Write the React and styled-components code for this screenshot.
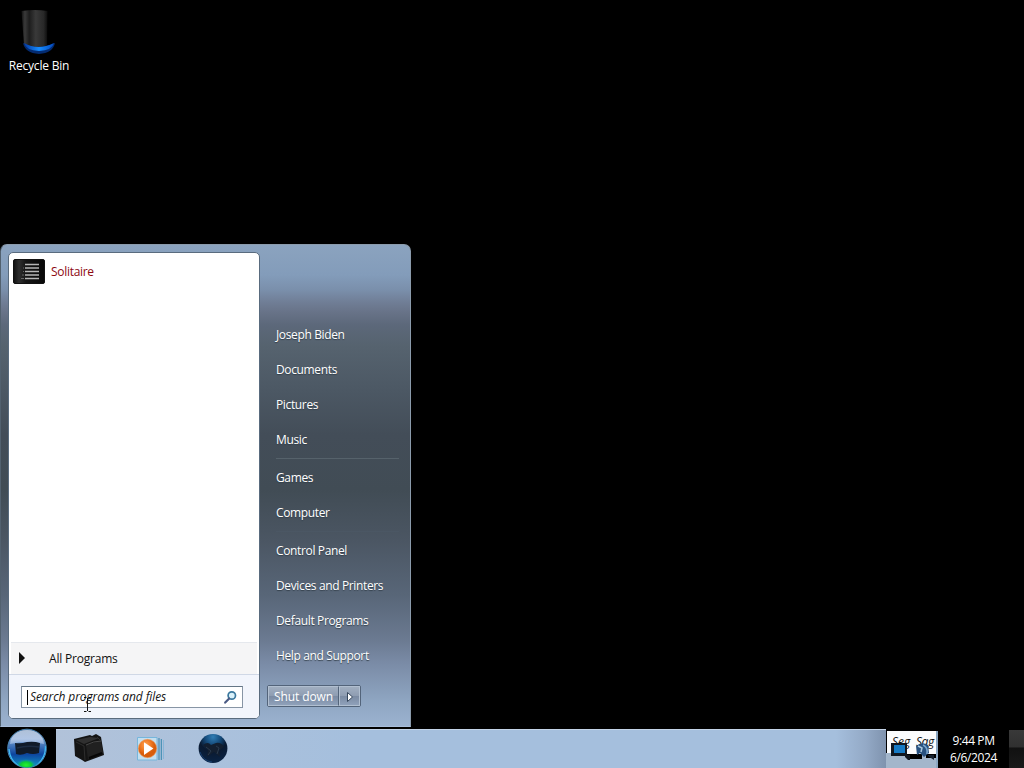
import React, { useState } from 'react';
import styled, { createGlobalStyle } from 'styled-components';

const places = [
  { name: 'Joseph Biden' },
  { name: 'Documents' },
  { name: 'Pictures' },
  { name: 'Music', line: true },
  { name: 'Games' },
  { name: 'Computer', line: true, faint: true },
  { name: 'Control Panel' },
  { name: 'Devices and Printers' },
  { name: 'Default Programs' },
  { name: 'Help and Support' },
];

export default function App() {
  const [search, setSearch] = useState('');

  return (
    <Screen>
      <GlobalStyle />
      <Desktop>
        <DesktopItem>
          <BinIcon />
          <span>Recycle Bin</span>
        </DesktopItem>

        <StartMenu>
          <Programs>
            <ProgramList>
              <Program>
                <SolitaireIcon />
                <span>Solitaire</span>
              </Program>
            </ProgramList>
            <AllPrograms>
              <Triangle $color="#111" />
              <span>All Programs</span>
            </AllPrograms>
            <SearchArea>
              <SearchBox>
                <Caret />
                <input
                  placeholder="Search programs and files"
                  value={search}
                  onChange={({ target }) => setSearch(target.value)}
                />
                <SearchIcon />
              </SearchBox>
            </SearchArea>
          </Programs>

          <Places>
            {places.map((place) => (
              <React.Fragment key={place.name}>
                <Place>{place.name}</Place>
                {place.line && <Line $faint={place.faint} />}
              </React.Fragment>
            ))}
            <Power>
              <button>Shut down</button>
              <button aria-label="More"><PowerArrow /></button>
            </Power>
          </Places>
        </StartMenu>
        <TextCursor />
      </Desktop>

      <Taskbar>
        <StartButton><Orb /></StartButton>
        <TaskButtons>
          <LibraryIcon />
          <PlayerIcon />
          <GlobeIcon />
        </TaskButtons>
        <Tray><TrayIcons /></Tray>
        <Clock>
          <span>9:44 PM</span>
          <span>6/6/2024</span>
        </Clock>
        <ShowDesktop />
      </Taskbar>
    </Screen>
  );
}

/* icons */

const BinIcon = () => (
  <svg width="48" height="48" viewBox="0 0 48 48">
    <defs>
      <linearGradient id="bin">
        <stop offset="0" stopColor="#111" />
        <stop offset=".13" stopColor="#3a3a3a" />
        <stop offset=".3" stopColor="#1d1d1d" />
        <stop offset=".55" stopColor="#393939" />
        <stop offset=".85" stopColor="#282828" />
        <stop offset="1" stopColor="#0c0c0c" />
      </linearGradient>
      <linearGradient id="binGlow">
        <stop offset="0" stopColor="#0437a0" />
        <stop offset=".5" stopColor="#168cff" />
        <stop offset="1" stopColor="#0448bb" />
      </linearGradient>
    </defs>
    <path d="M6.5 2 Q20 0 32.5 2 L32 37 Q20 41 9 36Z" fill="url(#bin)" />
    <path d="M8 34 Q22 42 40 34 Q38 44 24 45 Q10 44 8 34Z" fill="#042b70" />
    <path d="M9 34 Q23 42 39 34 Q37 41.5 24 42 Q11 41.5 9 34Z" fill="url(#binGlow)" />
  </svg>
);

const SolitaireIcon = () => (
  <svg width="32" height="26" viewBox="0 0 32 26">
    <defs>
      <linearGradient id="sol">
        <stop offset="0" stopColor="#101010" />
        <stop offset=".18" stopColor="#2e2e2e" />
        <stop offset=".4" stopColor="#151515" />
        <stop offset="1" stopColor="#080808" />
      </linearGradient>
    </defs>
    <rect x=".5" y=".5" width="31" height="24" rx="1.5" fill="url(#sol)" stroke="#111" />
    <path d="M12 5.5h14M12 9h14M12 12.5h14M12 16h14M12 19.5h14" stroke="#b5b5b5" strokeWidth="1.4" />
    <path d="M10 9h1M10 12.5h1M9 16h2M8 19.5h3" stroke="#666" />
  </svg>
);

const SearchIcon = () => (
  <svg width="15" height="15" viewBox="0 0 15 15">
    <circle cx="8.8" cy="5.5" r="3.7" fill="#d9f1fa" stroke="#3b789e" strokeWidth="1.7" />
    <path d="M6.2 8.5 L2.2 12.6" stroke="#4b5b85" strokeWidth="2.2" strokeLinecap="round" />
  </svg>
);

const PowerArrow = () => (
  <svg width="8" height="12" viewBox="0 0 8 12">
    <path d="M1.5 1.5 L6.5 6 L1.5 10.5Z" fill="#fff" stroke="#35465b" strokeWidth="1" />
  </svg>
);

const Orb = () => (
  <svg width="42" height="40" viewBox="0 0 42 40">
    <defs>
      <linearGradient id="orb" x2="0" y2="1">
        <stop offset="0" stopColor="#56749b" />
        <stop offset=".25" stopColor="#8fa9cf" />
        <stop offset=".4" stopColor="#4a7bbd" />
        <stop offset=".65" stopColor="#0d459f" />
        <stop offset="1" stopColor="#129bc8" />
      </linearGradient>
      <radialGradient id="orbGreen">
        <stop offset="0" stopColor="#25f52c" />
        <stop offset=".55" stopColor="#0bc83b" />
        <stop offset="1" stopColor="#0697b8" stopOpacity="0" />
      </radialGradient>
      <linearGradient id="orbShine" x2="0" y2="1">
        <stop offset="0" stopColor="#e9f2ff" stopOpacity=".6" />
        <stop offset="1" stopColor="#b9cff0" stopOpacity=".55" />
      </linearGradient>
      <clipPath id="orbClip"><circle cx="20" cy="20.5" r="19" /></clipPath>
    </defs>
    <circle cx="20" cy="20.5" r="19.3" fill="url(#orb)" stroke="#4b86b4" strokeWidth="1" />
    <g clipPath="url(#orbClip)">
      <ellipse cx="19" cy="37" rx="10" ry="6" fill="url(#orbGreen)" />
      <path d="M3 16 Q5 2 20 2 Q35 2 37 16 Q20 12 3 16Z" fill="url(#orbShine)" />
      <path d="M8 15 Q14 16 20 14 Q27 13 33 15 L32 25 Q26 27 20 25 Q14 28 9 26Z" fill="#101a29" />
      <path d="M10 20 Q20 17 32 19" stroke="#1c2b42" strokeWidth="1.5" fill="none" />
      <path d="M2 21 Q3 33 12 38M38.5 18 Q39 30 29 38" stroke="#42bcf4" strokeWidth="1.4" fill="none" />
    </g>
  </svg>
);

const LibraryIcon = () => (
  <svg width="32" height="32" viewBox="0 0 32 32">
    <path d="M1 6 L17 2 L19 3 L23 1 L28 4 L31 22 L12 29 L9 27 L2 23Z" fill="#141414" />
    <path d="M3 7 L17 4 L26 5 L11 11Z" fill="#303030" />
    <path d="M13 12 L28 8 L30 20 L15 26Z" fill="#202020" />
    <path d="M13 12 Q21 8 28 8" stroke="#4d4d4d" strokeWidth=".9" fill="none" />
    <path d="M3 9 L11 13 L12 27M24 4 L27 7" stroke="#343434" strokeWidth=".8" fill="none" />
    <path d="M16 25 L29 20" stroke="#060606" strokeWidth="2" />
  </svg>
);

const PlayerIcon = () => (
  <svg width="28" height="26" viewBox="0 0 28 26">
    <defs>
      <radialGradient id="play" cx=".4" cy=".3">
        <stop offset="0" stopColor="#ffa254" />
        <stop offset=".6" stopColor="#ee7923" />
        <stop offset="1" stopColor="#d85d0b" />
      </radialGradient>
    </defs>
    <path d="M.5 1.5 H20 V24 H.5Z" fill="#c4dfef" stroke="#76b6dc" />
    <path d="M22 2V24M24.3 3V24" stroke="#3587ad" strokeWidth="1" />
    <path d="M26.5 4V23" stroke="#7fb2d5" strokeWidth=".8" />
    <circle cx="10.5" cy="12.5" r="9.2" fill="url(#play)" stroke="#e99b60" strokeWidth=".6" />
    <path d="M7 6.2 L16.4 12.5 L7 19Z" fill="#fff" />
  </svg>
);

const GlobeIcon = () => (
  <svg width="30" height="32" viewBox="0 0 30 32">
    <defs>
      <radialGradient id="globe" cx=".5" cy=".1" r=".9">
        <stop offset="0" stopColor="#317eb5" />
        <stop offset=".3" stopColor="#154b7b" />
        <stop offset=".55" stopColor="#0a1a31" />
        <stop offset="1" stopColor="#0a2344" />
      </radialGradient>
    </defs>
    <circle cx="15" cy="15.5" r="14.4" fill="url(#globe)" />
    <path d="M5 12 Q10 8 13 12 L18 10 Q23 9 26 14 L21 18 L22 24 L16 19 L9 24 L10 17Z" fill="#131f30" />
    <path d="M8 14 L13 18 L10 22M18 13 L21 15 L19 21" stroke="#2a3a4d" strokeWidth="1" fill="none" />
    <path d="M2 19 Q5 28 14 29" stroke="#173f70" fill="none" />
  </svg>
);

const TrayIcons = () => (
  <svg width="52" height="37" viewBox="0 0 52 37">
    <rect x="1" width="49" height="23" fill="#fbfcfd" />
    <path d="M0 22h20v3h4v3h12v-4h4v3h10v10H0Z" fill="#a3b6cb" />
    <path d="M50 0h2v37h-2Z" fill="#8ba7c2" />
    <g fontFamily="Open Sans, sans-serif" fontSize="12" fontStyle="italic" fill="#111">
      <text x="6" y="15" textLength="18">Seg</text>
      <text x="30" y="15" textLength="18">Sag</text>
    </g>
    <rect x="5" y="12" width="16" height="13" fill="#101720" />
    <rect x="8" y="14" width="11" height="8" fill="#167ac4" />
    <path d="M19 24h5v5h-2l-3-3Z" fill="#101720" />
    <path d="M30 15 Q36 10 42 14 L43 22 L38 26 L34 22 L31 24Z" fill="#28517f" />
    <path d="M32 15 L36 17 L35 21" stroke="#a9c8de" strokeWidth="1.5" fill="none" />
    <path d="M37 14 Q42 16 41 23" stroke="#7aa6ce" strokeWidth="1.6" fill="none" />
    <path d="M42 24h6v5l-6-4Z" fill="#15202e" />
  </svg>
);

const Beam = (props) => (
  <svg {...props} width="9" height="17" viewBox="0 0 9 17">
    <path d="M1 1.5h2.5M5.5 1.5H8M4.5 2V15M1 15.5h2.5M5.5 15.5H8" stroke="#111" fill="none" />
  </svg>
);

/* styles */

const GlobalStyle = createGlobalStyle`
  * {
    box-sizing: border-box;
  }
  body {
    margin: 0;
    background: #000;
    overflow: hidden;
  }
  button, input {
    font: inherit;
    letter-spacing: inherit;
  }
  svg {
    display: block;
    flex-shrink: 0;
  }
`;

const Screen = styled.div`
  width: 1024px;
  height: 768px;
  display: flex;
  flex-direction: column;
  background: #000;
  color: #fff;
  font-family: "Open Sans", "Noto Sans", sans-serif;
  font-size: 12px;
  line-height: 16px;
  letter-spacing: -0.2px;
`;

const Desktop = styled.main`
  position: relative;
  height: 728px;
`;

const DesktopItem = styled.div`
  width: 78px;
  padding-top: 9px;
  display: flex;
  flex-direction: column;
  align-items: center;
  gap: 1px;
`;

const StartMenu = styled.section`
  position: absolute;
  left: 0;
  bottom: 1px;
  width: 411px;
  height: 483px;
  padding: 7px 0 7px 7px;
  display: flex;
  border: 1px solid #8b9bac;
  border-left-color: #52616f;
  border-bottom-color: #a9bedb;
  border-radius: 7px 7px 0 0;
  background: linear-gradient(
    #8ba3bf 0, #839cba 30px, #7a8fab 45px, #707e96 57px, #687388 67px,
    #5c687a 80px, #56636f 100px, #4c5864 145px, #434d58 190px, #414c55 245px,
    #4b5663 295px, #586678 350px, #6b7a91 395px, #7a8ba6 418px,
    #8ea5c1 455px, #9bb2d0 100%
  );
`;

const Programs = styled.div`
  width: 252px;
  display: flex;
  flex-direction: column;
  overflow: hidden;
  border: 1px solid #596b7e;
  border-radius: 5px;
  background: #fff;
`;

const ProgramList = styled.div`
  flex: 1;
  padding: 6px 4px;
`;

const Program = styled.div`
  display: flex;
  align-items: center;
  gap: 6px;
  color: #8d0811;
  letter-spacing: -0.3px;
`;

const AllPrograms = styled.div`
  height: 32px;
  margin: 0 2px;
  padding: 0 8px;
  display: flex;
  align-items: center;
  gap: 24px;
  border-top: 1px solid #e5e8ed;
  background: #f5f5f6;
  color: #111;
`;

const Triangle = styled.i`
  margin-bottom: 2px;
  border-left: 6px solid ${({ $color }) => $color};
  border-top: 6px solid transparent;
  border-bottom: 6px solid transparent;
`;

const SearchArea = styled.div`
  height: 44px;
  padding: 11px 16px 0 12px;
  border-top: 1px solid #d0d8e6;
  background: #f2f5fc;
`;

const SearchBox = styled.label`
  height: 22px;
  padding: 0 4px 0 5px;
  display: flex;
  align-items: center;
  border: 1px solid #8795a5;
  border-top-color: #657686;
  background: #fff;
  input {
    flex: 1;
    min-width: 0;
    height: 18px;
    padding: 0 0 1px 2px;
    border: 0;
    outline: none;
    background: transparent;
    font-style: italic;
    letter-spacing: -0.1px;
  }
  input::placeholder {
    color: #161616;
    opacity: 1;
  }
`;

const Caret = styled.i`
  width: 1px;
  height: 15px;
  background: #000;
`;

const Places = styled.nav`
  flex: 1;
  padding: 65px 11px 0 16px;
  letter-spacing: -0.36px;
`;

const Place = styled.div`
  height: 35px;
  padding-top: 1px;
  display: flex;
  align-items: center;
  text-shadow: 0 1px 1px #34404c;
`;

const Line = styled.hr`
  height: 1px;
  margin: 1px 0;
  border: 0;
  background: ${({ $faint }) => ($faint ? '#4b5764' : '#56626b')};
`;

const Power = styled.div`
  width: 94px;
  height: 22px;
  margin: 12px 0 0 -9px;
  display: flex;
  border: 1px solid #53647a;
  border-radius: 2px;
  button {
    padding: 1px 0 0;
    display: flex;
    align-items: center;
    justify-content: center;
    border: 1px solid #b1bfd0;
    background: linear-gradient(#a0aec0, #8f9db2 48%, #7b8ba3 52%, #8fa1ba);
    color: #fff;
  }
  button:first-child {
    width: 71px;
    border-right-color: #53647a;
    letter-spacing: -0.1px;
  }
  button:last-child {
    flex: 1;
  }
`;

const TextCursor = styled(Beam)`
  position: absolute;
  left: 83px;
  top: 696px;
`;

const Taskbar = styled.footer`
  height: 40px;
  display: flex;
  background: #000;
`;

const StartButton = styled.div`
  width: 56px;
  padding-left: 7px;
`;

const TaskButtons = styled.div`
  width: 830px;
  margin-top: 1px;
  padding-left: 17px;
  display: flex;
  align-items: center;
  border-top: 1px solid #c4d4e8;
  background: linear-gradient(90deg, #b1c2d9, #abc1dc 150px, #a5bfdd 300px, #a5bfdd 780px, #93a9c6 810px, #7f93ae);
  svg + svg {
    margin-left: 32px;
  }
  svg:last-child {
    margin-left: 33px;
  }
`;

const Tray = styled.div`
  width: 52px;
  padding-top: 3px;
`;

const Clock = styled.div`
  width: 71px;
  padding-top: 4px;
  display: flex;
  flex-direction: column;
  align-items: center;
  line-height: 17px;
  letter-spacing: -0.4px;
`;

const ShowDesktop = styled.div`
  flex: 1;
  margin-top: 2px;
  background: linear-gradient(#393939, #303030 45%, #111 47%, #191919);
`;
